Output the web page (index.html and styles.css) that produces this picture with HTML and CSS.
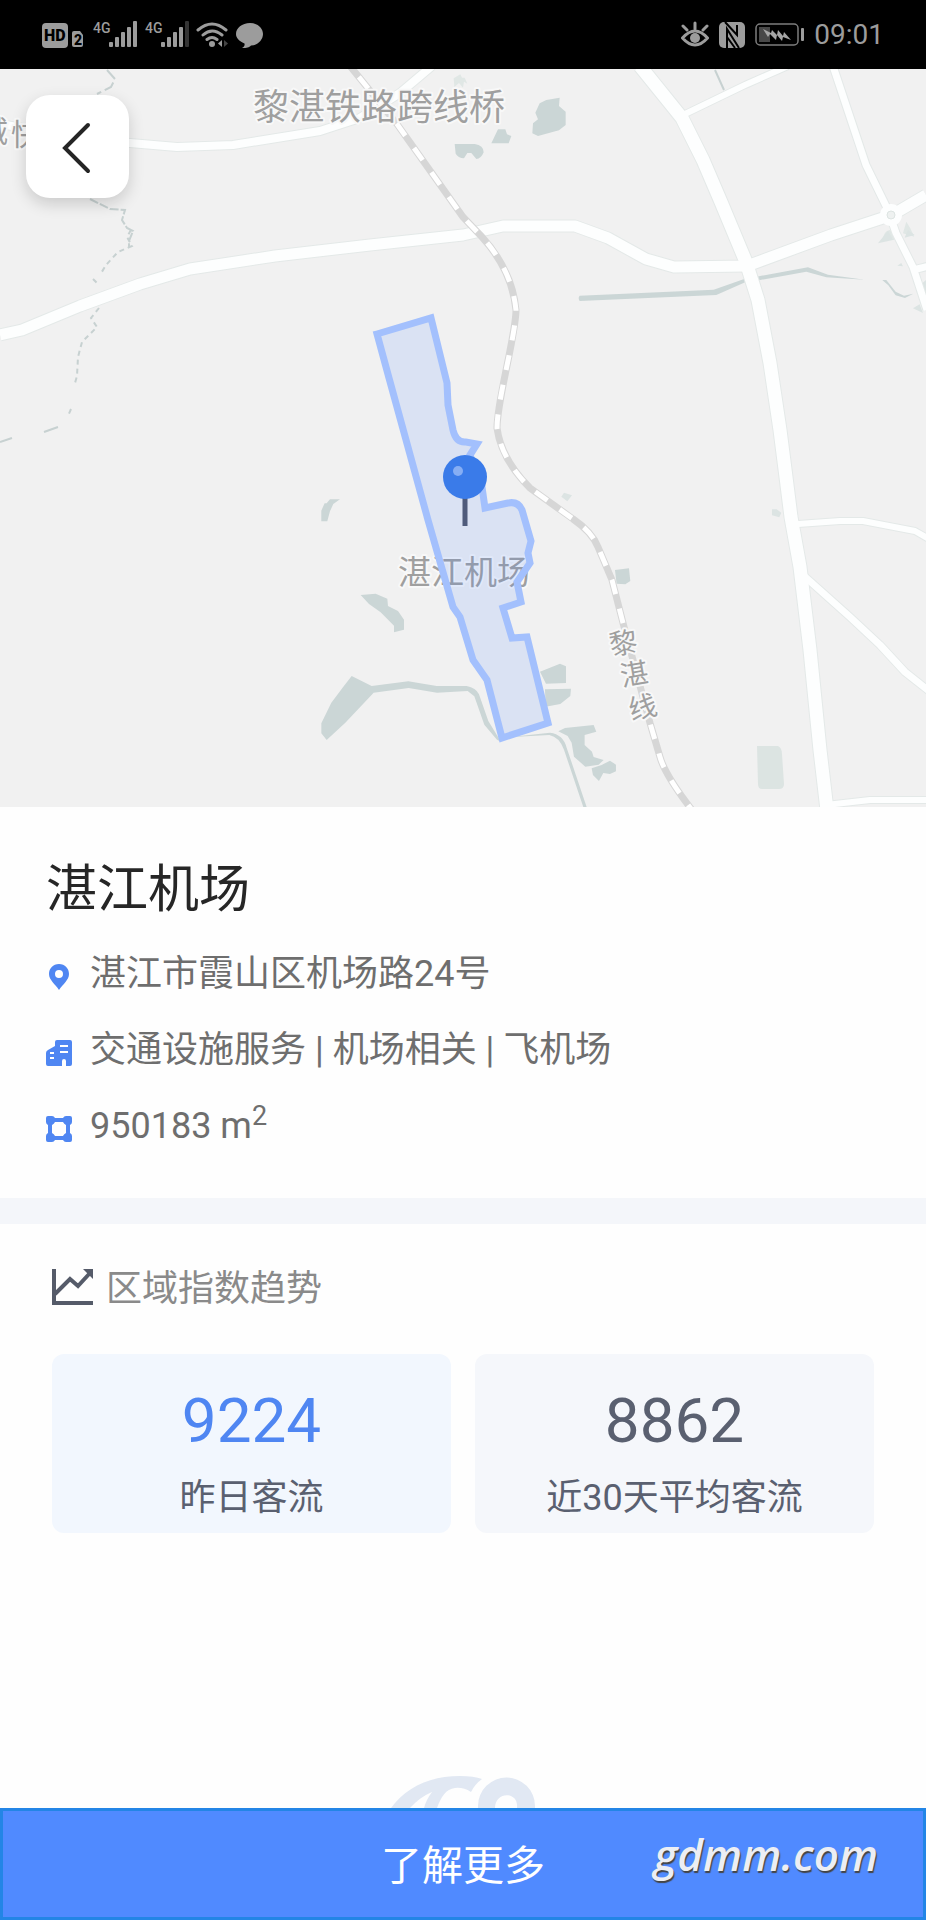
FILE: index.html
```html
<!DOCTYPE html>
<html lang="zh-CN">
<head>
<meta charset="utf-8">
<meta name="viewport" content="width=device-width, initial-scale=1">
<title>湛江机场</title>
<link rel="stylesheet" href="styles.css">
</head>
<body>
<div class="screen">
  <header class="status">
    <svg class="status-left" viewBox="0 0 224 30" aria-hidden="true">
      <g fill="#9c9c9c">
        <rect x="0" y="3" width="26" height="25" rx="4"/>
        <path d="M30 13q0-2 2-2h6l3 4v10q0 2-2 2h-7q-2 0-2-2z"/>
        <rect x="67" y="22" width="4" height="5" rx="1"/><rect x="73" y="17" width="4" height="10" rx="1"/><rect x="79" y="12" width="4" height="15" rx="1"/><rect x="85" y="7" width="4" height="20" rx="1"/><rect x="91" y="1" width="4" height="26" rx="1"/>
        <rect x="119" y="22" width="4" height="5" rx="1"/><rect x="125" y="17" width="4" height="10" rx="1"/><rect x="131" y="12" width="4" height="15" rx="1"/><rect x="137" y="7" width="4" height="20" rx="1"/>
        <rect x="143" y="1" width="4" height="26" rx="1" fill="#353535"/>
        <circle cx="170" cy="24" r="3"/>
        <path d="M180 20v7l-4-3.500z"/><path d="M182 20v7l4-3.500z" fill="#444"/>
        <path d="M208 3c7.500 0 13 5 13 11s-5.500 11.500-12 11.500c-2 2-4 2.500-9 2.500 2-1 3-2.500 2.500-4.500C197 21 194 18 194 14 194 8 200 3 208 3z"/>
        <text class="net" x="51" y="13">4G</text><text class="net" x="103" y="13">4G</text>
      </g>
      <g fill="none" stroke="#9c9c9c" stroke-width="3" stroke-linecap="round">
        <path d="M156 10q14-12 28 0M161 15q9-8 19 0M165 19.500q5-4 10 0"/>
      </g>
      <text class="hd" x="2" y="21">HD</text><text class="sim" x="32" y="25">2</text>
    </svg>
    <div class="status-right">
      <svg width="28" height="28" viewBox="0 0 28 28" fill="none" stroke="#9c9c9c" stroke-width="3" stroke-linecap="round" aria-hidden="true">
        <path d="M1.500 17Q14 3 26.500 17 14 31 1.500 17zM14 8V2M6 9L2 5M22 9L26 5"/><circle cx="14" cy="17" r="5" fill="#9c9c9c" stroke="none"/>
      </svg>
      <svg width="28" height="28" viewBox="0 0 28 28" aria-hidden="true">
        <rect x="1" y="1" width="26" height="26" rx="5" fill="#9c9c9c"/>
        <path d="M7 1l12 13V4M9 27V8l12 19M9 16l8 11" fill="none" stroke="#000" stroke-width="2"/>
      </svg>
      <svg width="50" height="26" viewBox="0 0 50 26" aria-hidden="true">
        <rect x="1" y="2" width="42" height="21" rx="4" fill="none" stroke="#7d7d7d" stroke-width="1.500"/>
        <rect x="4" y="5" width="11" height="15" fill="#484848"/><rect x="46" y="6" width="3" height="13" rx="1" fill="#9c9c9c"/>
        <path d="M8 7l8 4 1-3 5 5 1-5 5 6 1-4 7 8-8-3-1 4-5-6-1 5-6-6-2 3z" fill="#a6a6a6"/>
      </svg>
      <time>09:01</time>
    </div>
  </header>

  <section class="map" aria-label="地图">
    <svg class="map-canvas" viewBox="0 69 926 738" preserveAspectRatio="xMidYMid slice">
      <g fill="#cbd6d6">
        <g transform="translate(463 0) scale(.3333)">
          <path d="M250 300l40-7-2 25 20 17v40l-20 16-63 17-17-8 2-30 15-12-8-20 13-28zM85 430l20-42h22l5 15 13 5-8 22zM-25 432h60q27 4 27 25-8 20-22 20l-15-18h-12l-10 16q-18-2-25-14z"/>
          <path fill="#e0e7e5" d="M-28 235l20-12 5 10 8 0 8 18-10-6-3 18-12-14-14 12zM1260 720q0-25 20-30l14 5 0 25zM1320 700l10-35 12 20 12 25z"/>
        </g>
        <g transform="translate(463 230) scale(.3333)">
          <path d="M350 197l402-18 98-34v10l-90 40-410 18q-6-8 0-16zM880 140l155-28 60 22 110 15-115-7-60-17-150 27zM1258 150h12l28 35 25 12 28-6-25 13-28-8-22-30z"/>
          <path fill="#dce4e3" d="M1245 40l30-38 15 28zM1335 0l20 15-30 8zM1303 107l12-8 5 10zM1350 235l20-12 10 26zM295 800l8-12 24 8-14 18zM927 838l14 0 14 10-6 14-22-6zM1378 160l11-10v50l-11-20z"/>
        </g>
        <g transform="translate(0 230) scale(.3333)">
          <path d="M1020 808h-30l-10 12h-6l-10 22v32h18l8-30 10-22z"/>
        </g>
        <g transform="translate(300 520) scale(.3333)">
          <path d="M182 225l45-4 35 15 2 22 30 15 18 26v30l-30 8 0-20-40-40-35-25zM720 455l60-24 18 8v50l-60 2zM735 508l78-2-2 22-30 24-44 8zM945 150l42-5 4 38-15 10-26-2zM775 634l20-10 86-9 8 20-35 10 0 30 22 20 5 16 30 9-15 14-40 6-34-30-7-42-12-20zM875 745l30-10 25-13 18 12 0 20-18 8-20-3-13 24-18-18zM130 500l25-32 60 30 110-14 85 14 90 0q28 5 37 25l28 80 38 62-12-6-38-45-30-85-20-16-92 5-85-14-105 14-85 90-56 52-16-20v-30l30-62z"/>
          <path d="M620 652l130-14q40 5 50 45l60 178h-10l-58-172q-14-38-44-44z"/>
        </g>
        <path fill="#dce4e2" d="M757 746h21q4 2 4 8l2 30q0 5-5 5h-17q-4 0-4-5z"/>
      </g>
      <g fill="none" stroke="#c7d1d1" stroke-width="2">
        <path d="M107 70l8 9-4 8-14 7" stroke-dasharray="12 4"/>
        <path d="M90 199l20 10 15 1-3 10 5 8 6 3-4 10v7" stroke-dasharray="9 2"/>
        <path d="M131 230l-4 7 5 9-14 6-12 13-6 10M93 279l6 6M99 308l-8 10 6 9-15 15-4 15-1 19-2 7M71 409l-3 7" stroke-dasharray="5 4"/>
        <path d="M58 427l-14 5M12 438l-12 4M715 70l9 20"/>
      </g>
      <g class="road-edge">
        <path d="M0 124l80 14 50 5 47 4 56-2 87-14 40-13 40-25 32-27" stroke-width="10"/>
        <path d="M0 335l22-5 58-24 60-22 50-15 85-13 95-11 93-10 40-9h72l33 12 38 21 28 8 73-1 84-31 61-20 34-20" stroke-width="13"/>
        <path d="M640 66l42 52 21 42 18 42 25 60 12 38 12 63 10 67 6 47 5 40 9 50 10 83 10 100 7 60" stroke-width="15"/>
        <path d="M685 114l60-29 43-19M798 524l42-3h23l52 10 14 8M826 805l44-5h60" stroke-width="8"/>
        <path d="M833 66l33 99 22 45 8 23 17 34 14 43M913 270l16-4M803 575l47 42 30 28 25 27 24 19" stroke-width="9"/>
      </g>
      <g class="road">
        <path d="M0 124l80 14 50 5 47 4 56-2 87-14 40-13 40-25 32-27" stroke-width="8"/>
        <path d="M0 335l22-5 58-24 60-22 50-15 85-13 95-11 93-10 40-9h72l33 12 38 21 28 8 73-1 84-31 61-20 34-20" stroke-width="11"/>
        <path d="M640 66l42 52 21 42 18 42 25 60 12 38 12 63 10 67 6 47 5 40 9 50 10 83 10 100 7 60" stroke-width="13"/>
        <path d="M685 114l60-29 43-19M798 524l42-3h23l52 10 14 8M826 805l44-5h60" stroke-width="6"/>
        <path d="M833 66l33 99 22 45 8 23 17 34 14 43M913 270l16-4M803 575l47 42 30 28 25 27 24 19" stroke-width="7"/>
        <circle cx="891" cy="215" r="7" stroke-width="8"/>
      </g>
      <circle cx="891" cy="215" r="4" fill="#eef1f0" stroke="#dde4e2" stroke-width="1"/>
      <g fill="none">
        <path stroke="#d6d6d6" stroke-width="7" d="M350 66L397 124 463 217 482 237Q512 270 516 310C516 335 497 400 497 428 500 450 512 470 530 488L573 519Q592 532 598 547L612 580 623 623 650 723 660 757Q665 775 692 810"/>
        <path stroke="#fff" stroke-width="5" stroke-dasharray="15 15" stroke-dashoffset="-14" d="M350 66L397 124 463 217 482 237Q512 270 516 310C516 335 497 400 497 428 500 450 512 470 530 488L573 519Q592 532 598 547L612 580 623 623 650 723 660 757Q665 775 692 810"/>
      </g>
      <g class="map-label">
        <text x="253" y="120" font-size="36">黎湛铁路跨线桥</text>
        <text x="398" y="584" font-size="33">湛江机场</text>
        <text x="-22" y="142" font-size="30">城</text>
        <text x="11" y="145" font-size="30">快</text>
        <g font-size="28" text-anchor="middle">
          <text transform="translate(625 653) rotate(-10)">黎</text>
          <text transform="translate(636 684) rotate(-10)">湛</text>
          <text transform="translate(645 717) rotate(-14)">线</text>
        </g>
      </g>
      <path d="M377 334L431 318 447 383 448 405 453 430Q456 443 466 442L477 444 470 455 482 487 485 508 508 503Q518 501 522 510L531 541 528 553 530 563 517 582 521 602 503 608 512 638 527 637 548 723 502 738 487 680 473 660 460 617 453 607 428 520 389 378z" fill="#4f8aff" fill-opacity=".14" stroke="#a3c0fd" stroke-width="7"/>
      <path d="M465 497v29" stroke="#4f5b7b" stroke-width="5"/>
      <circle cx="465" cy="477" r="22" fill="#3a7be9"/><circle cx="458" cy="471" r="5" fill="#86aef4"/>
    </svg>
    <button class="back" type="button" aria-label="返回">
      <svg width="103" height="103" viewBox="0 0 103 103" fill="none" stroke="#252525" stroke-width="4" stroke-linecap="round"><path d="M62 30L39 53l23 23"/></svg>
    </button>
  </section>

  <main class="content">
    <section class="place">
      <h1>湛江机场</h1>
      <ul class="facts">
        <li>
          <svg viewBox="0 0 26 26" aria-hidden="true"><path fill="#4f86f2" fill-rule="evenodd" d="M13 0C7 0 3 4.500 3 10c0 6 6 10 10 16 4-6 10-10 10-16C23 4.500 19 0 13 0zm0 6a4 4 0 1 1 0 8 4 4 0 0 1 0-8z"/></svg>
          <span>湛江市霞山区机场路24号</span>
        </li>
        <li>
          <svg viewBox="0 0 26 26" aria-hidden="true"><path fill="#4f86f2" d="M9 2q0-2 2-2h13q2 0 2 2v22q0 2-2 2h-4v-5q0-2-2-2t-2 2v5H2q-2 0-2-2V13q0-2 2-3l7-4z"/><path stroke="#fff" stroke-width="2" d="M14 6h8M14 12h8M4 13h4M4 18h4"/></svg>
          <span>交通设施服务 | 机场相关 | 飞机场</span>
        </li>
        <li>
          <svg viewBox="0 0 26 26" aria-hidden="true"><path fill="#4f86f2" fill-rule="evenodd" d="M2 0h4q2 0 3 2h8q1-2 3-2h4q2 0 2 2v4q0 2-2 3v8q2 1 2 3v4q0 2-2 2h-4q-2 0-3-2H9q-1 2-3 2H2q-2 0-2-2v-4q0-2 2-3V9Q0 8 0 6V2q0-2 2-2zm7 6q-1 2-3 3v8q2 1 3 3h8q1-2 3-3V9q-2-1-3-3z"/></svg>
          <span>950183 m<sup>2</sup></span>
        </li>
      </ul>
    </section>

    <section class="trend">
      <h2>
        <svg viewBox="0 0 41 36" aria-hidden="true"><path fill="none" stroke="#555b69" stroke-width="4" d="M2 0v34h39M3 25L18 10l8 7L38 4"/><path fill="#555b69" d="M31 0h10v10z"/></svg>
        区域指数趋势
      </h2>
      <div class="cards">
        <div class="card card-blue"><strong>9224</strong><span>昨日客流</span></div>
        <div class="card"><strong>8862</strong><span>近30天平均客流</span></div>
      </div>
    </section>

    <svg class="brand" viewBox="0 0 144 32" aria-hidden="true">
      <g fill="#e1e8f3"><path d="M0 32C14 13 36 0 69 0q14 0 22 3-7 5-11 13-8-5-16-4c-9 1-14 9-18 20H33q2-8 8-16-12 5-22 16z"/>
      <path d="M87 32v-2a28 28 0 0 1 57 0v2h-18c2-17-22-17-22 0z"/></g>
    </svg>
  </main>

  <footer class="bar">
    <button class="more" type="button">了解更多</button>
    <span class="site">gdmm.com</span>
  </footer>
</div>
</body>
</html>
```
FILE: styles.css
```css
* {
  box-sizing: border-box;
}

body {
  margin: 0;
  background: #fefefe;
  color: #6e6e6e;
  font-family: Roboto, "Noto Sans CJK SC", sans-serif;
}

button {
  font-family: inherit;
  cursor: pointer;
}

.screen {
  display: flex;
  flex-direction: column;
  min-height: 100vh;
}

.status {
  display: flex;
  align-items: center;
  justify-content: space-between;
  height: 69px;
  padding: 0 42px;
  background: #000;
  color: #9c9c9c;
}

.status-left {
  width: 224px;
  height: 30px;
}

.status-right {
  display: flex;
  align-items: center;
  gap: 9px;
}

.status-right time {
  font-size: 28px;
  line-height: 36px;
}

.net {
  font-size: 14px;
  font-weight: 500;
}

.hd {
  font-size: 16px;
  font-weight: 900;
  fill: #000;
}

.sim {
  font-size: 14px;
  font-weight: 900;
  fill: #000;
}

.map {
  position: relative;
  background: #f1f1f1;
}

.map-canvas {
  display: block;
  width: 100%;
  aspect-ratio: 926 / 738;
}

.road,
.road-edge {
  fill: none;
  stroke: #fdfefe;
  stroke-linejoin: round;
}

.road-edge {
  stroke: #e4e9e8;
}

.map-label {
  fill: #9f9f9f;
  stroke: #f8f8f8;
  stroke-width: 4px;
  stroke-linejoin: round;
  paint-order: stroke;
}

.back {
  position: absolute;
  top: 26px;
  left: 26px;
  display: flex;
  padding: 0;
  border: 0;
  border-radius: 24px;
  background: #fff;
  box-shadow: 0 6px 16px rgba(0, 0, 0, 0.16);
}

.content {
  display: flex;
  flex: 1;
  flex-direction: column;
}

.place {
  padding: 53px 46px 46px;
  border-bottom: 26px solid #f4f6fa;
}

h1 {
  margin: 0 0 28px;
  color: #262626;
  font-size: 51px;
  font-weight: 400;
  line-height: 60px;
}

.facts {
  display: flex;
  flex-direction: column;
  gap: 24px;
  margin: 0;
  padding: 0;
  list-style: none;
  font-size: 36px;
  line-height: 52px;
}

.facts li {
  display: flex;
  align-items: center;
  gap: 18px;
}

.facts svg {
  flex: none;
  width: 26px;
  height: 26px;
  margin-top: 5px;
}

.facts sup {
  font-size: 27px;
  line-height: 0;
}

.trend {
  padding: 39px 52px 40px;
}

h2 {
  display: flex;
  align-items: center;
  gap: 13px;
  margin: 0 0 39px;
  color: #8a8a8a;
  font-size: 36px;
  font-weight: 400;
  line-height: 52px;
}

h2 svg {
  width: 41px;
  height: 36px;
  margin-bottom: 4px;
}

.cards {
  display: grid;
  grid-template-columns: 1fr 1fr;
  gap: 24px;
}

.card {
  display: flex;
  flex-direction: column;
  gap: 15px;
  padding: 31px 12px 9px;
  border-radius: 12px;
  background: #f5f7fb;
  color: #5a6070;
  text-align: center;
}

.card strong {
  font-size: 62px;
  font-weight: 400;
  line-height: 72px;
}

.card span {
  font-size: 36px;
  line-height: 52px;
}

.card-blue {
  background: #f2f7fe;
}

.card-blue strong {
  color: #4f86f2;
}

.brand {
  width: 144px;
  height: 32px;
  margin: auto auto 0;
}

.bar {
  position: relative;
}

.more {
  display: block;
  width: 100%;
  height: 112px;
  padding: 0 0 4px;
  border: 3px solid #2385e6;
  background: #508aff;
  color: #fff;
  font-size: 41px;
}

.site {
  position: absolute;
  right: 48px;
  bottom: 38px;
  color: #eceef4;
  font-family: "Open Sans", sans-serif;
  font-size: 44px;
  font-style: italic;
  font-weight: 600;
  line-height: 56px;
  text-shadow: 1px 2px 1px #444;
  pointer-events: none;
}
```
